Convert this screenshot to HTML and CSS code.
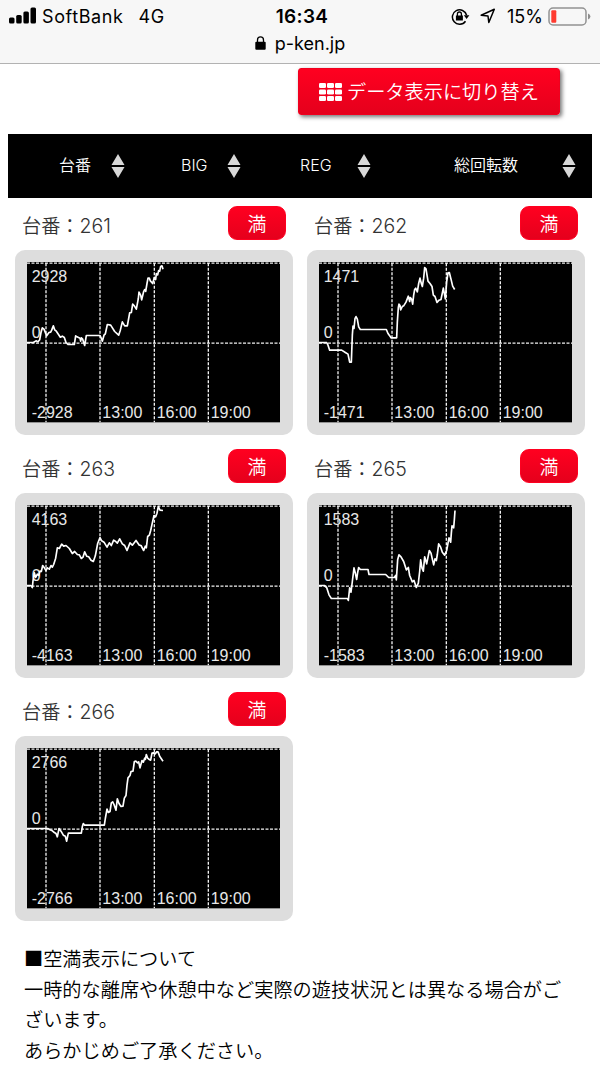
FILE: index.html
```html
<!DOCTYPE html>
<html lang="ja">
	<head>
		<meta charset="UTF-8">
		<title>p-ken.jp</title>
		<link rel="stylesheet" href="styles.css">
	</head>
	<body>
		<!-- ステータスバー -->
		<div class="status">
			<div class="status_row">
				<div class="carrier">
					<svg class="signal" width="27" height="17" viewBox="0 0 27 17"><rect x="0" y="10.500" width="5.500" height="6" rx="1.500"/><rect x="7.200" y="8" width="5.500" height="8.500" rx="1.500"/><rect x="14.400" y="4.500" width="5.500" height="12" rx="1.500"/><rect x="21.500" y="0.500" width="5.500" height="16" rx="1.500"/></svg>
					<span class="name">SoftBank</span>
					<span>4G</span>
				</div>
				<div class="clock">16:34</div>
				<div class="power">
					<svg class="lockrot" width="19" height="17" viewBox="0 0 19 17">
						<path d="M14.500 13.200A7.200 7.200 0 1 1 15.600 7.300" fill="none" stroke="#000" stroke-width="1.500"/>
						<path d="M12.800 7.300h5.600l-2.800 3.600z"/>
						<path d="M4.900 7.500h7v5h-7z"/>
						<path d="M6.400 8V6a2 2 0 0 1 4 0v2" fill="none" stroke="#000" stroke-width="1.300"/>
					</svg>
					<svg class="loc" width="16" height="16" viewBox="0 0 16 16"><path d="M1.200 7.300L14.300 1.300L8.800 14.500L8 8z" fill="none" stroke="#000" stroke-width="1.500" stroke-linejoin="round"/></svg>
					<span class="percent">15%</span>
					<svg width="43" height="19" viewBox="0 0 43 19">
						<rect x="1" y="1" width="37" height="17" rx="4" fill="#f7f7f7" stroke="#929292" stroke-width="1.500"/>
						<rect x="3.300" y="3.300" width="5" height="12.400" rx="1" fill="#ff3b30"/>
						<path d="M40 6.500q2.400 1 2.400 3t-2.400 3z" fill="#8e8e8e"/>
					</svg>
				</div>
			</div>
			<div class="url">
				<svg width="11" height="14" viewBox="0 0 11 14"><rect x="0.300" y="5.800" width="10.400" height="8" rx="1"/><path d="M2.500 6V3.900a3 3 0 0 1 6 0V6" fill="none" stroke="#000" stroke-width="1.300"/></svg>
				<span>p-ken.jp</span>
			</div>
		</div>

		<div class="switch">
			<a class="btn" href="#">
				<svg width="23" height="18" viewBox="0 0 23 18" fill="#fff"><rect x="0" y="0" width="7" height="5" rx="1.300"/><rect x="8" y="0" width="7" height="5" rx="1.300"/><rect x="16" y="0" width="7" height="5" rx="1.300"/><rect x="0" y="6.500" width="7" height="5" rx="1.300"/><rect x="8" y="6.500" width="7" height="5" rx="1.300"/><rect x="16" y="6.500" width="7" height="5" rx="1.300"/><rect x="0" y="13" width="7" height="5" rx="1.300"/><rect x="8" y="13" width="7" height="5" rx="1.300"/><rect x="16" y="13" width="7" height="5" rx="1.300"/></svg>
				<span>データ表示に切り替え</span>
			</a>
		</div>

		<!-- 並べ替え -->
		<div class="sort">
			<div class="col c1"><span>台番</span><svg class="arrow" width="16" height="26" viewBox="0 0 16 26"><path d="M8 1l6.500 11h-13zM8 25l6.500-11h-13z"/></svg></div>
			<div class="col c2"><span>BIG</span><svg class="arrow" width="16" height="26" viewBox="0 0 16 26"><path d="M8 1l6.500 11h-13zM8 25l6.500-11h-13z"/></svg></div>
			<div class="col c3"><span>REG</span><svg class="arrow" width="16" height="26" viewBox="0 0 16 26"><path d="M8 1l6.500 11h-13zM8 25l6.500-11h-13z"/></svg></div>
			<div class="col c4"><span>総回転数</span><svg class="arrow" width="16" height="26" viewBox="0 0 16 26"><path d="M8 1l6.500 11h-13zM8 25l6.500-11h-13z"/></svg></div>
		</div>

		<!-- 共通の目盛り線 -->
		<svg class="defs" width="0" height="0">
			<defs>
				<g id="grid">
					<path class="dash" d="M0 3H759M0 243H759M57 3V480M219 3V480M382 3V480M544 3V480"/>
					<path class="base" d="M0 481H759"/>
					<text x="226" y="467">13:00</text>
					<text x="389" y="467">16:00</text>
					<text x="551" y="467">19:00</text>
				</g>
			</defs>
		</svg>

		<div class="list">
			<div class="item">
				<div class="head"><span class="no">台番：<b>261</b></span><span class="full">満</span></div>
				<div class="frame">
					<svg class="graph" viewBox="0 0 759 482">
						<use href="#grid"/>
						<text x="14" y="59">2928</text><text x="14" y="227">0</text><text x="14" y="467">-2928</text>
						<polyline transform="translate(-51,-51)" points="51,292 70,292 78,287 84,290 89,284 93,262 97,248 102,252 110,272 117,262 122,261 125,255 130,242 134,254 139,258 151,276 157,273 163,277 168,292 174,298 193,298 197,272 201,275 210,279 212,288 214,278 218,282 224,301 229,271 270,271 273,277 277,288 282,270 286,266 292,238 302,240 314,259 326,270 331,255 337,230 344,242 352,242 356,220 359,203 364,202 368,177 373,182 379,192 385,160 387,141 392,150 395,164 401,139 404,133 407,139 411,115 414,99 418,99 421,107 428,115 433,97 437,103 439,85 443,89 446,76 449,78 452,64 456,62 459,72"/>
					</svg>
				</div>
			</div>
			<div class="item">
				<div class="head"><span class="no">台番：<b>262</b></span><span class="full">満</span></div>
				<div class="frame">
					<svg class="graph" viewBox="0 0 759 482">
						<use href="#grid"/>
						<text x="14" y="59">1471</text><text x="14" y="227">0</text><text x="14" y="467">-1471</text>
						<polyline transform="translate(-57,-51)" points="57,292 80,292 84,300 89,315 125,315 136,322 144,327 149,351 154,351 157,270 159,243 162,250 165,220 168,214 172,222 176,245 181,253 259,253 264,265 270,273 273,278 290,278 292,230 295,187 297,177 300,181 302,194 307,184 311,182 318,171 325,153 329,169 331,157 335,162 338,177 341,150 344,133 347,129 352,140 356,115 360,99 364,115 367,124 371,99 374,67 378,71 384,108 390,115 396,124 400,150 405,154 411,172 417,165 423,163 430,129 436,161 440,110 444,83 448,82 453,102 458,123 464,133"/>
					</svg>
				</div>
			</div>
			<div class="item">
				<div class="head"><span class="no">台番：<b>263</b></span><span class="full">満</span></div>
				<div class="frame">
					<svg class="graph" viewBox="0 0 759 482">
						<use href="#grid"/>
						<text x="14" y="59">4163</text><text x="14" y="227">0</text><text x="14" y="467">-4163</text>
						<polyline transform="translate(-51,-51)" points="51,292 62,292 67,298 69,278 73,254 77,268 82,258 86,262 90,249 94,250 98,232 103,239 108,247 112,239 118,243 123,232 127,237 131,229 137,210 142,179 148,181 155,168 161,174 168,172 178,181 187,196 194,190 202,199 208,200 214,211 219,207 224,191 230,204 236,206 243,216 250,220 256,203 263,166 270,148 275,158 282,162 291,177 298,164 304,172 311,156 317,160 322,165 329,152 337,167 344,172 351,187 360,164 367,171 378,157 388,171 393,172 401,187 406,174 409,179 413,145 418,141 422,127 427,104 432,82 437,86 441,75 445,55 450,66 459,67"/>
					</svg>
				</div>
			</div>
			<div class="item">
				<div class="head"><span class="no">台番：<b>265</b></span><span class="full">満</span></div>
				<div class="frame">
					<svg class="graph" viewBox="0 0 759 482">
						<use href="#grid"/>
						<text x="14" y="59">1583</text><text x="14" y="227">0</text><text x="14" y="467">-1583</text>
						<polyline transform="translate(-57,-51)" points="57,292 73,292 80,298 87,320 94,331 142,331 145,337 149,299 153,312 157,280 162,239 166,255 170,274 173,253 176,238 181,244 204,244 207,259 257,259 266,268 283,268 287,262 289,275 293,215 297,200 303,206 311,220 319,245 325,238 329,262 337,281 342,277 349,298 355,285 359,250 362,215 366,240 370,249 374,206 380,227 388,187 393,195 397,213 401,230 405,212 409,217 412,199 416,167 422,177 427,192 434,201 440,187 443,171 447,149 452,162 454,135 456,113 461,119 463,95 465,67"/>
					</svg>
				</div>
			</div>
			<div class="item">
				<div class="head"><span class="no">台番：<b>266</b></span><span class="full">満</span></div>
				<div class="frame">
					<svg class="graph" viewBox="0 0 759 482">
						<use href="#grid"/>
						<text x="14" y="59">2766</text><text x="14" y="227">0</text><text x="14" y="467">-2766</text>
						<polyline transform="translate(-51,-190)" points="51,431 113,431 120,435 127,438 133,443 138,446 142,456 147,431 153,439 160,451 166,454 170,469 175,445 214,445 217,425 220,416 224,421 283,421 286,401 291,373 295,383 300,380 304,354 308,351 312,359 318,376 322,342 327,356 333,365 339,364 343,340 348,332 351,301 354,279 360,272 363,260 369,259 373,230 378,229 382,234 386,231 390,249 396,227 400,232 404,220 406,224 409,209 413,220 418,224 422,226 426,205 431,204 436,207 440,201 444,201 449,214 459,229"/>
					</svg>
				</div>
			</div>
		</div>

		<div class="note">
			<p>■空満表示について</p>
			<p>一時的な離席や休憩中など実際の遊技状況とは異なる場合がございます。</p>
			<p>あらかじめご了承ください。</p>
		</div>
	</body>
</html>
```
FILE: styles.css
```css
*{margin: 0;padding: 0;box-sizing: border-box;}
a{text-decoration: none;}
svg{display: block;}
body{width: 600px;height: 1067px;overflow: hidden;background: #fff;color: #000;font-family: "Noto Sans CJK JP",sans-serif;font-weight: 350;}

.status{height: 64px;background: #f7f7f7;border-bottom: 1px solid #b2b2b2;font-family: Inter,sans-serif;font-size: 18px;font-weight: 400;}
.status_row{height: 32px;display: grid;grid-template-columns: 1fr auto 1fr;align-items: center;padding: 0 9px;}
.carrier{display: flex;align-items: center;letter-spacing: .6px;}
.carrier .name{margin: 0 15px 0 6px;}
.signal{margin-top: -2px;}
.clock{font-size: 19px;font-weight: 600;letter-spacing: .3px;padding-left: 4px;}
.power{display: flex;align-items: center;justify-content: flex-end;}
.lockrot{margin-right: 10px;}
.loc{margin-right: 11px;}
.percent{margin-right: 5px;}
.url{height: 22px;display: flex;align-items: center;justify-content: center;}
.url svg{margin-right: 9px;}

.switch{height: 69px;padding: 4px 40px 0 0;display: flex;justify-content: flex-end;align-items: flex-start;}
.btn{width: 262px;height: 47px;display: flex;align-items: center;padding-left: 20px;color: #fff;font-size: 19.2px;background: linear-gradient(#ff0020,#e5001c);border: 1px solid #f0001e;border-radius: 3px;box-shadow: 2px 2px 4px rgba(0,0,0,.55);}
.btn svg{margin-right: 5px;}
.btn span{padding-bottom: 2px;}

.sort{height: 64px;margin: 0 8px;margin-top: 1px;background: #000;color: #fff;font-size: 16px;display: grid;grid-template-columns: 118px 116px 130px 205px;align-items: center;}
.col{display: flex;align-items: center;justify-content: space-between;}
.col span{padding-bottom: 4px;}
.c1{padding-left: 51px;}
.c2{padding-left: 55px;}
.c3{padding-left: 58px;}
.c2 span,.c3 span{padding-bottom: 2px;font-family: Inter,sans-serif;font-weight: 300;}
.c4{padding-left: 82px;}
.arrow{fill: #d8d8d8;}

.defs{position: absolute;}
.list{display: grid;grid-template-columns: 278px 278px;grid-auto-rows: 229px;gap: 14px;padding: 8px 15px 0;}
.head{height: 44px;padding: 0 7px;display: flex;justify-content: space-between;}
.no{font-size: 19.2px;line-height: 39px;color: #333;}
.no b{font-family: Inter,sans-serif;font-weight: 300;font-size: 19.5px;}
.full{width: 58px;height: 34px;border-radius: 9px;background: linear-gradient(#ff0020,#e5001c);border: 1px solid #ff0020;color: #fff;font-size: 19px;line-height: 32px;text-align: center;}
.frame{height: 185px;padding: 12px;background: #ddd;border-radius: 10px;}
.graph{width: 253px;height: 161px;background: #000;font-family: "Liberation Sans",sans-serif;font-size: 48px;font-weight: 400;}
.graph polyline{fill: none;stroke: #fff;stroke-width: 5;stroke-linejoin: round;}
.dash{fill: none;stroke: #f2f2f2;stroke-width: 4;stroke-dasharray: 9 4.5;}
.base{stroke: #ddd;stroke-width: 2;}
text{fill: #e8e8e8;}

.note{padding: 22px 24px 0;font-size: 19.2px;line-height: 30.5px;}
```
